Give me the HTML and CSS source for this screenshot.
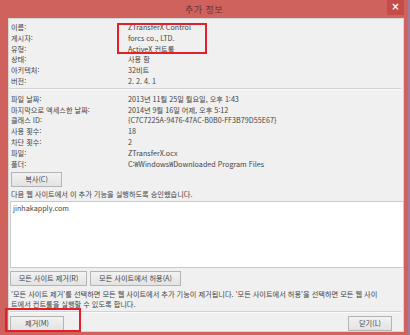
FILE: index.html
```html
<!DOCTYPE html>
<html lang="ko">
<head>
<meta charset="utf-8">
<title>추가 정보</title>
<link rel="stylesheet" href="styles.css">
</head>
<body>
<div class="window">
  <div class="titlebar">
    <span class="title">추가 정보</span>
    <span class="close">×</span>
  </div>
  <div class="panel">
    <div class="info">
      <div class="group">
        <div class="row"><span class="label">이름:</span><span class="value">ZTransferX Control</span></div>
        <div class="row"><span class="label">게시자:</span><span class="value">forcs co., LTD.</span></div>
        <div class="row"><span class="label">유형:</span><span class="value">ActiveX 컨트롤</span></div>
        <div class="row"><span class="label">상태:</span><span class="value">사용 함</span></div>
        <div class="row"><span class="label">아키텍처:</span><span class="value">32비트</span></div>
        <div class="row"><span class="label">버전:</span><span class="value">2. 2. 4. 1</span></div>
      </div>
      <div class="sep"></div>
      <div class="group">
        <div class="row"><span class="label">파일 날짜:</span><span class="value">2013년 11월 25일 월요일, 오후 1:43</span></div>
        <div class="row"><span class="label">마지막으로 액세스한 날짜:</span><span class="value">2014년 9월 16일 어제, 오후 5:12</span></div>
        <div class="row"><span class="label">클래스 ID:</span><span class="value">{C7C7225A-9476-47AC-B0B0-FF3B79D55E67}</span></div>
        <div class="row"><span class="label">사용 횟수:</span><span class="value">18</span></div>
        <div class="row"><span class="label">차단 횟수:</span><span class="value">2</span></div>
        <div class="row"><span class="label">파일:</span><span class="value">ZTransferX.ocx</span></div>
        <div class="row"><span class="label">폴더:</span><span class="value">C:₩Windows₩Downloaded Program Files</span></div>
      </div>
    </div>
    <button class="btn btn-copy">복사(C)</button>
    <p class="caption">다음 웹 사이트에서 이 추가 기능을 실행하도록 승인했습니다.</p>
    <div class="sites">jinhakapply.com</div>
    <div class="site-actions">
      <button class="btn btn-remove-all">모든 사이트 제거(R)</button>
      <button class="btn btn-allow-all">모든 사이트에서 허용(A)</button>
    </div>
    <p class="note">'모든 사이트 제거'를 선택하면 모든 웹 사이트에서 추가 기능이 제거됩니다. '모든 사이트에서 허용'을 선택하면 모든 웹 사이<br>트에서 컨트롤을 실행할 수 있도록 합니다.</p>
    <div class="sep sep-bottom"></div>
    <div class="footer">
      <button class="btn btn-remove">제거(M)</button>
      <button class="btn btn-close">닫기(L)</button>
    </div>
    <div class="highlight hl-values"></div>
    <div class="highlight hl-remove"></div>
  </div>
</div>
</body>
</html>
```

FILE: styles.css
```css
* {
  box-sizing: border-box;
}

html, body {
  margin: 0;
  padding: 0;
}

body {
  width: 410px;
  height: 335px;
  overflow: hidden;
  background: #a27a9f;
  font-family: "Noto Sans CJK KR", "Noto Sans", sans-serif;
  font-size: 7.2px;
  color: #444;
}

.window {
  width: 408px;
  height: 335px;
  background: #d0625d;
  padding: 0 4px 5px 8px;
  display: flex;
  flex-direction: column;
}

.titlebar {
  height: 18px;
  flex: none;
  position: relative;
  display: flex;
  align-items: center;
  justify-content: center;
  margin-left: -8px;
  margin-right: -4px;
}

.title {
  font-size: 9px;
  color: #6a3330;
  letter-spacing: 0.5px;
}

.close {
  position: absolute;
  right: 4px;
  top: 0;
  width: 17px;
  height: 15px;
  background: #c64c47;
  color: #fff;
  font-size: 10px;
  font-weight: bold;
  line-height: 14px;
  text-align: center;
  font-family: "DejaVu Sans", sans-serif;
}

.panel {
  flex: 1;
  position: relative;
  background: #f0f0f0;
  border: 1px solid #d6d6d6;
  padding: 3px 2px 0 1px;
  display: flex;
  flex-direction: column;
  align-items: flex-start;
}

.info {
  width: 100%;
}

.row {
  display: flex;
  height: 10.8px;
  line-height: 10.8px;
  white-space: nowrap;
}

.label {
  width: 118px;
  padding-left: 1px;
  flex: none;
}

.sep {
  width: 100%;
  height: 2px;
  border-top: 1px solid #d2d2d2;
  border-bottom: 1px solid #fbfbfb;
  margin: 1px 0 4px;
}

.btn {
  font-family: inherit;
  font-size: 7.2px;
  color: #444;
  background: linear-gradient(#f2f2f2, #e3e3e3);
  border: 1px solid #b4b4b4;
  border-radius: 0;
  padding: 0;
  height: 15px;
  line-height: 13px;
  margin: 0;
}

.btn-copy {
  width: 51px;
  margin: 3px 0 0 1px;
}

.caption {
  margin: 2px 0 0 1px;
  line-height: 10.8px;
}

.sites {
  width: 394px;
  height: 67px;
  margin-top: 1px;
  background: #fff;
  border: 1px solid #cacaca;
  padding: 1px 2px;
  line-height: 10px;
}

.site-actions {
  display: flex;
  gap: 3px;
  margin-top: 3px;
}

.btn-remove-all {
  width: 77px;
}

.btn-allow-all {
  width: 91px;
}

.note {
  margin: 3px 0 0 1px;
  line-height: 10px;
  white-space: nowrap;
}

.sep-bottom {
  margin: 2px 0 3px;
}

.footer {
  width: 100%;
  display: flex;
  justify-content: space-between;
  padding-right: 9px;
}

.btn-remove {
  width: 54px;
}

.btn-close {
  width: 44px;
}

.highlight {
  position: absolute;
  border: 2px solid #e3202a;
  pointer-events: none;
}

.hl-values {
  left: 108px;
  top: 4px;
  width: 90px;
  height: 31px;
}

.hl-remove {
  left: -4px;
  top: 289px;
  width: 76px;
  height: 24px;
}
```
